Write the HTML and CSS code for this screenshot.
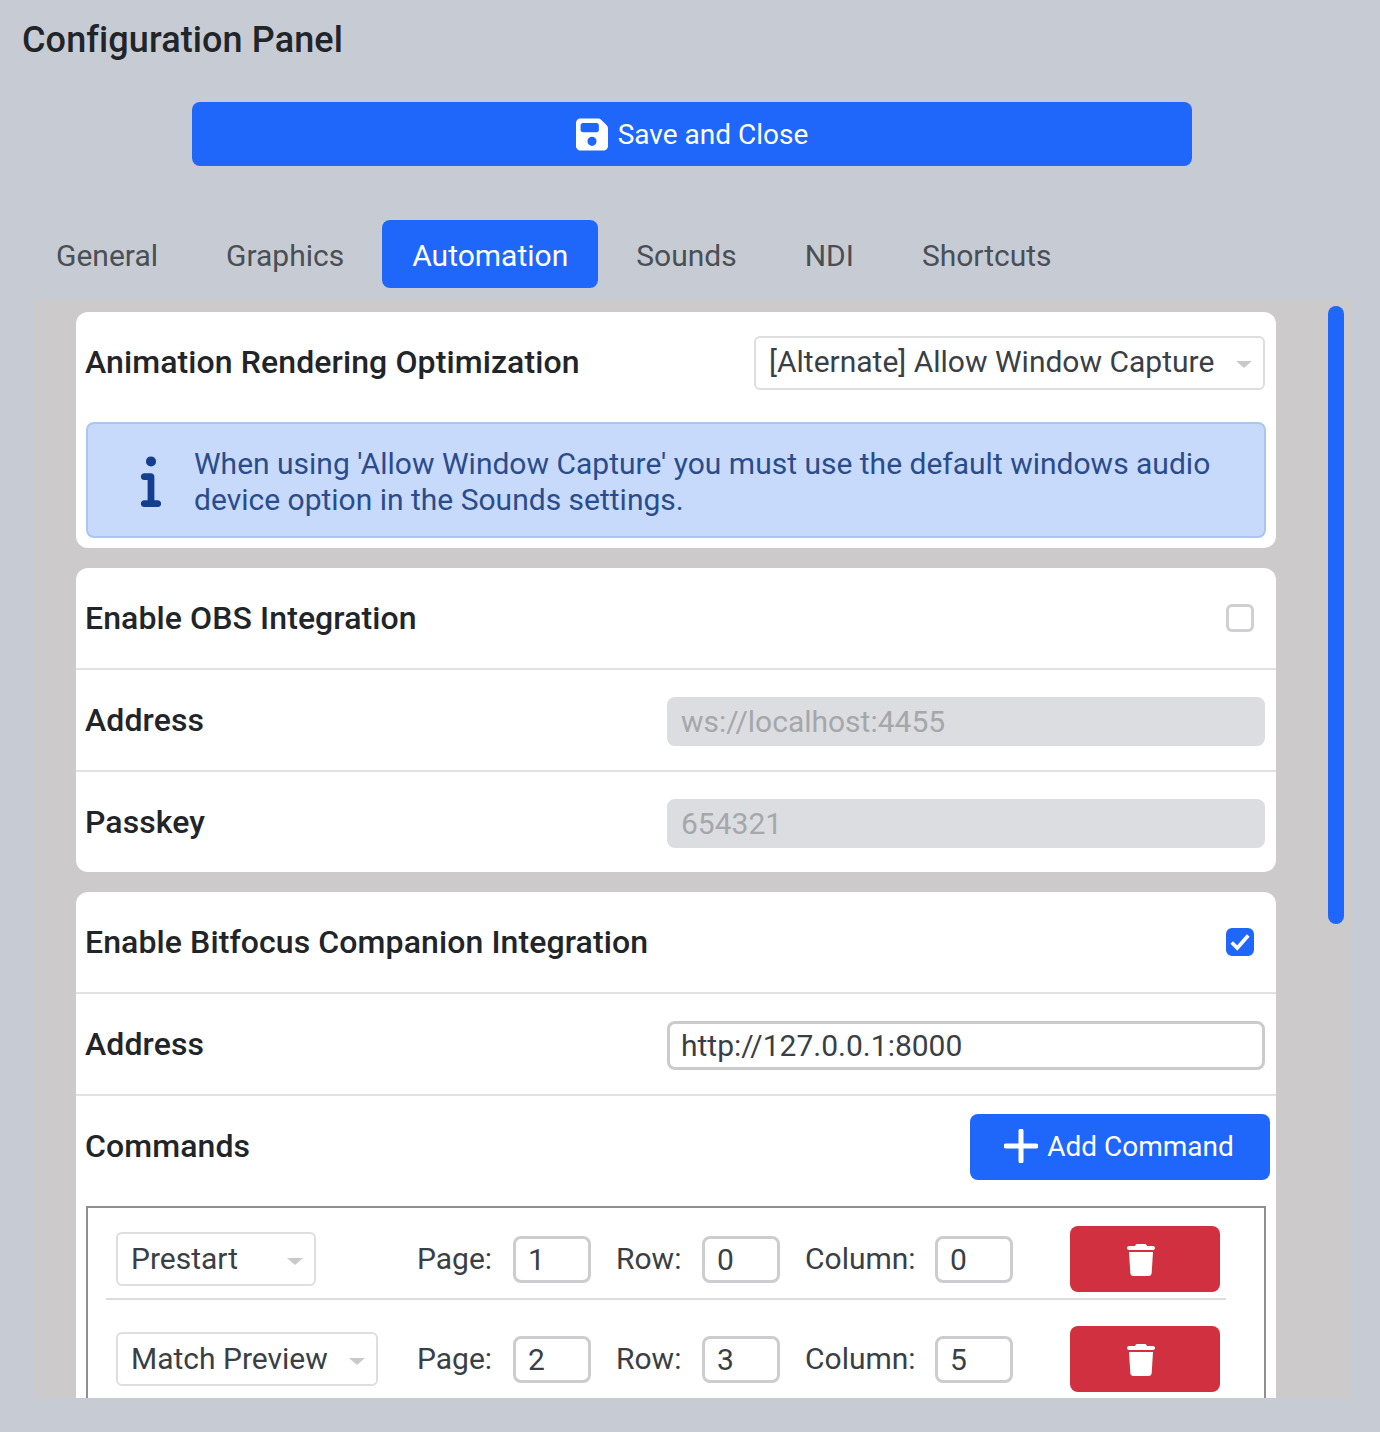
FILE: index.html
```html
<!DOCTYPE html>
<html lang="en">
<head>
    <meta charset="UTF-8">
    <title>Configuration Panel</title>
    <link rel="stylesheet" href="styles.css">
</head>
<body>
    <h1 class="page-title">Configuration Panel</h1>
    <button class="btn btn-primary save-btn">
        <svg class="icon-save" viewBox="0 0 448 512"><path d="M64 32C28.7 32 0 60.7 0 96V416c0 35.3 28.7 64 64 64H384c35.3 0 64-28.7 64-64V173.3c0-17-6.7-33.3-18.7-45.3L352 50.7C340 38.7 323.7 32 306.7 32H64zm0 96c0-17.7 14.3-32 32-32H288c17.7 0 32 14.3 32 32v64c0 17.7-14.3 32-32 32H96c-17.7 0-32-14.3-32-32V128zM224 288a64 64 0 1 1 0 128 64 64 0 1 1 0-128z"/></svg>
        Save and Close
    </button>
    <nav class="tabs">
        <a class="tab">General</a>
        <a class="tab">Graphics</a>
        <a class="tab active">Automation</a>
        <a class="tab">Sounds</a>
        <a class="tab">NDI</a>
        <a class="tab">Shortcuts</a>
    </nav>
    <div class="panel">
        <div class="scroll-thumb"></div>
        <section class="card">
            <div class="row row-first">
                <label class="row-label">Animation Rendering Optimization</label>
                <div class="select select-wide">[Alternate] Allow Window Capture<span class="caret"></span></div>
            </div>
            <div class="alert">
                <svg class="icon-info" viewBox="0 0 192 512"><path d="M48 80a48 48 0 1 1 96 0A48 48 0 1 1 48 80zM0 224c0-17.7 14.3-32 32-32H96c17.7 0 32 14.3 32 32V448h32c17.7 0 32 14.3 32 32s-14.3 32-32 32H32c-17.7 0-32-14.3-32-32s14.3-32 32-32H64V256H32c-17.7 0-32-14.3-32-32z"/></svg>
                <p>When using 'Allow Window Capture' you must use the default windows audio device option in the Sounds settings.</p>
            </div>
        </section>
        <section class="card">
            <div class="row">
                <label class="row-label">Enable OBS Integration</label>
                <span class="checkbox"></span>
            </div>
            <div class="row">
                <label class="row-label">Address</label>
                <input class="text-input" type="text" value="ws://localhost:4455" disabled>
            </div>
            <div class="row row-last">
                <label class="row-label">Passkey</label>
                <input class="text-input" type="text" value="654321" disabled>
            </div>
        </section>
        <section class="card">
            <div class="row">
                <label class="row-label">Enable Bitfocus Companion Integration</label>
                <span class="checkbox checked">
                    <svg viewBox="0 0 24 24"><path d="M3 12.5l6 6L21 5"/></svg>
                </span>
            </div>
            <div class="row">
                <label class="row-label">Address</label>
                <input class="text-input" type="text" value="http://127.0.0.1:8000">
            </div>
            <div class="row commands-head">
                <label class="row-label">Commands</label>
                <button class="btn btn-primary add-btn">
                    <svg class="icon-plus" viewBox="0 0 34 34"><path d="M17 2V32M2 17H32"/></svg>
                    Add Command
                </button>
            </div>
            <div class="commands">
                <div class="cmd-row">
                    <div class="select select-short">Prestart<span class="caret"></span></div>
                    <span class="cmd-label">Page:</span><input class="num-input" type="text" value="1">
                    <span class="cmd-label">Row:</span><input class="num-input" type="text" value="0">
                    <span class="cmd-label">Column:</span><input class="num-input" type="text" value="0">
                    <button class="btn btn-danger"><svg class="icon-trash" viewBox="0 0 448 512"><path d="M135.2 17.7L128 32H32C14.3 32 0 46.3 0 64S14.3 96 32 96H416c17.7 0 32-14.3 32-32s-14.3-32-32-32H320l-7.2-14.3C307.4 6.8 296.3 0 284.2 0H163.8c-12.1 0-23.2 6.8-28.6 17.7zM416 128H32L53.2 467c1.6 25.3 22.6 45 47.9 45H346.9c25.3 0 46.3-19.7 47.9-45L416 128z"/></svg></button>
                </div>
                <div class="cmd-row">
                    <div class="select select-long">Match Preview<span class="caret"></span></div>
                    <span class="cmd-label">Page:</span><input class="num-input" type="text" value="2">
                    <span class="cmd-label">Row:</span><input class="num-input" type="text" value="3">
                    <span class="cmd-label">Column:</span><input class="num-input" type="text" value="5">
                    <button class="btn btn-danger"><svg class="icon-trash" viewBox="0 0 448 512"><path d="M135.2 17.7L128 32H32C14.3 32 0 46.3 0 64S14.3 96 32 96H416c17.7 0 32-14.3 32-32s-14.3-32-32-32H320l-7.2-14.3C307.4 6.8 296.3 0 284.2 0H163.8c-12.1 0-23.2 6.8-28.6 17.7zM416 128H32L53.2 467c1.6 25.3 22.6 45 47.9 45H346.9c25.3 0 46.3-19.7 47.9-45L416 128z"/></svg></button>
                </div>
            </div>
        </section>
    </div>
</body>
</html>
```

FILE: styles.css
```css
* {
    box-sizing: border-box;
}
html, body {
    height: 100%;
}
body {
    margin: 0;
    overflow: hidden;
    background-color: #c7ccd4;
    font-family: Roboto, 'Liberation Sans', sans-serif;
    color: #212529;
}
.page-title {
    margin: 0;
    padding: 19px 0 0 22px;
    height: 102px;
    font-size: 36px;
    line-height: 42px;
    font-weight: 500;
    letter-spacing: 0.1px;
}
.btn {
    display: flex;
    align-items: center;
    justify-content: center;
    border: none;
    border-radius: 8px;
    font-family: inherit;
    color: #fff;
}
.btn-primary {
    background-color: #1f66fb;
}
.btn-danger {
    background-color: #d03040;
    width: 150px;
    height: 66px;
    padding: 2px 8px 0 0;
}
.save-btn {
    width: 1000px;
    height: 64px;
    margin-left: 192px;
    gap: 10px;
    font-size: 28px;
}
.icon-save {
    width: 32px;
    height: 37px;
    fill: #fff;
}
.tabs {
    display: flex;
    gap: 6px;
    margin: 54px 0 12px 25px;
}
.tab {
    height: 68px;
    padding: 0 31px;
    line-height: 71px;
    font-size: 30px;
    color: #4a4f55;
    border-radius: 8px;
}
.tab.active {
    margin: 0 1px;
    padding: 0 30px;
    background-color: #1f66fb;
    color: #fff;
}
.panel {
    position: relative;
    margin-left: 36px;
    width: 1316px;
    height: 1098px;
    padding: 12px 0 0 40px;
    background-color: #cccacb;
    overflow: hidden;
}
.scroll-thumb {
    position: absolute;
    left: 1292px;
    top: 6px;
    width: 16px;
    height: 618px;
    border-radius: 8px;
    background-color: #1f66fb;
}
.card {
    width: 1200px;
    margin-bottom: 20px;
    background-color: #fff;
    border-radius: 12px;
}
.card:first-of-type {
    padding-bottom: 10px;
}
.row {
    display: flex;
    align-items: center;
    justify-content: space-between;
    height: 102px;
    padding: 0 11px 0 9px;
    border-bottom: 2px solid #e2e2e4;
}
.row-first {
    height: 100px;
    border-bottom: none;
}
.row-last {
    height: 100px;
    border-bottom: none;
}
.row-label {
    font-size: 32px;
    font-weight: 500;
    color: #212529;
    letter-spacing: 0.1px;
}
.select {
    display: flex;
    align-items: center;
    justify-content: space-between;
    height: 54px;
    padding: 0 11px 2px 13px;
    border: 2px solid #dedee0;
    border-radius: 6px;
    background-color: #fff;
    font-size: 30px;
    white-space: nowrap;
    color: #3a3f45;
}
.select-wide {
    width: 511px;
    margin-top: 2px;
    padding-bottom: 4px;
}
.select-short {
    width: 200px;
}
.select-long {
    width: 262px;
}
.caret {
    width: 0;
    height: 0;
    margin-top: 6px;
    border-left: 8px solid transparent;
    border-right: 8px solid transparent;
    border-top: 7px solid #c9c9cb;
}
.alert {
    display: flex;
    align-items: center;
    width: 1180px;
    height: 116px;
    margin: 10px 10px 0;
    padding: 0 40px 0 52px;
    gap: 32px;
    background-color: #c7dafb;
    border: 2px solid #aac6ee;
    border-radius: 8px;
    color: #2b4c8c;
}
.alert p {
    margin: 0;
    padding-top: 4px;
    font-size: 30px;
    line-height: 36px;
}
.icon-info {
    flex: none;
    width: 22px;
    height: 54px;
    fill: #143e8f;
}
.checkbox {
    display: block;
    width: 28px;
    height: 28px;
    margin-right: 11px;
    border: 3px solid #d0d0d2;
    border-radius: 6px;
    background-color: #fff;
}
.checkbox.checked {
    background-color: #1f66fb;
    border-color: #1f66fb;
}
.checkbox svg {
    display: block;
    width: 22px;
    height: 22px;
    fill: none;
    stroke: #fff;
    stroke-width: 4;
}
.text-input {
    width: 598px;
    height: 49px;
    margin-top: 2px;
    padding: 0 11px;
    border: 3px solid #cbcbcd;
    border-radius: 8px;
    font-family: inherit;
    font-size: 30px;
    color: #3a3f45;
    background-color: #fff;
}
.text-input:disabled {
    background-color: #dcdde1;
    border-color: #dcdde1;
    color: #a5a7ab;
}
.commands-head {
    padding-right: 6px;
    border-bottom: none;
}
.commands-head .row-label {
    margin-bottom: 2px;
}
.add-btn {
    width: 300px;
    height: 66px;
    gap: 9px;
    padding: 0 2px 2px 0;
    font-size: 28px;
}
.icon-plus {
    width: 34px;
    height: 34px;
    fill: none;
    stroke: #fff;
    stroke-width: 5;
    stroke-linecap: round;
}
.commands {
    margin: 8px 10px 0;
    padding: 18px 38px 0 18px;
    border: 2px solid #8f8f91;
    height: 300px;
}
.cmd-row {
    display: grid;
    grid-template-columns: 301px 96px 103px 86px 103px 130px 135px 150px;
    align-items: center;
    padding: 0 0 6px 10px;
    font-size: 30px;
    color: #3a3f45;
    border-bottom: 2px solid #dcdcde;
}
.cmd-row + .cmd-row {
    padding-top: 26px;
}
.cmd-row:last-child {
    border-bottom: none;
}
.cmd-label {
    margin-bottom: 2px;
}
.num-input {
    width: 78px;
    height: 47px;
    padding: 0 12px;
    border: 3px solid #cdcdcf;
    border-radius: 8px;
    font-family: inherit;
    font-size: 30px;
    color: #3a3f45;
}
.icon-trash {
    width: 28px;
    height: 32px;
    fill: #fff;
}
```
